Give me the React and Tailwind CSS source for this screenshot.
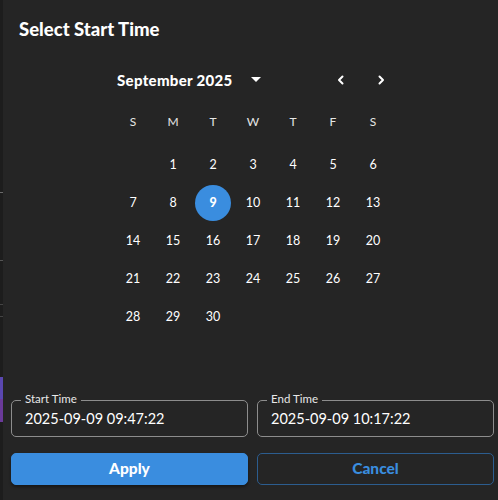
import React from "react";

const weekdays = ["S", "M", "T", "W", "T", "F", "S"];

function Chevron({ dir }) {
  return (
    <svg width="12" height="12" viewBox="0 0 12 12" fill="none" stroke="white" strokeWidth="2" strokeLinecap="round" strokeLinejoin="round">
      {dir === "left" ? <path d="M7.5 2.5 L4 6 L7.5 9.5" /> : <path d="M4.5 2.5 L8 6 L4.5 9.5" />}
    </svg>
  );
}

function Field({ label, value }) {
  return (
    <div className="relative flex-1 h-[37px] rounded-[5px] border border-[#8d8d8d] flex items-center px-[13px]">
      <span className="absolute -top-[9px] left-[9px] px-[4px] bg-[#252525] text-[11.5px] leading-[14px] text-[#e8e8e8]">
        {label}
      </span>
      <span className="text-[14.5px] text-white">{value}</span>
    </div>
  );
}

export default function App() {
  const cells = [];
  for (let i = 0; i < 1; i++) cells.push(null);
  for (let d = 1; d <= 30; d++) cells.push(d);

  return (
    <div className="w-[498px] h-[500px] flex bg-[#1e1e1e] overflow-hidden" style={{ fontFamily: "Lato, 'Noto Sans', sans-serif" }}>
      <div className="w-[3px] h-full flex flex-col bg-[#1d1d1d]">
        <div className="h-[192px]" />
        <div className="h-px bg-[#6a6a6a]" />
        <div className="h-[67px]" />
        <div className="h-px bg-[#555]" />
        <div className="h-[43px]" />
        <div className="h-px bg-[#444]" />
        <div className="h-[11px]" />
        <div className="h-px bg-[#444]" />
        <div className="h-[60px]" />
        <div className="h-[22px] bg-[#5a47b0]" />
        <div className="h-[23px] bg-[#6a3a9a]" />
      </div>
      <div className="flex-1 h-full bg-[#252525] flex flex-col">
        <div className="pl-[16px] pt-[17px] text-[18.5px] font-black text-white leading-[24px]">Select Start Time</div>

        <div className="flex items-center mt-[27px] pl-[114px] h-[24px]">
          <span className="w-[134px] text-[15px] tracking-[0.3px] font-black text-white">September 2025</span>
          <svg width="10" height="6" viewBox="0 0 10 6"><path d="M0 0 L10 0 L5 5 Z" fill="white" /></svg>
          <div className="ml-[74px] flex items-center gap-[28px]">
            <Chevron dir="left" />
            <Chevron dir="right" />
          </div>
        </div>

        <div className="ml-[110px] mt-[21px] w-[280px]">
          <div className="grid grid-cols-7 h-[18px] items-center">
            {weekdays.map((w, i) => (
              <div key={i} className="text-center text-[12px] text-[#e6e6e6]">{w}</div>
            ))}
          </div>
          <div className="grid grid-cols-7 mt-[16px] gap-y-[2px]">
            {cells.map((d, i) => (
              <div key={i} className="h-[36px] flex items-center justify-center">
                {d === 9 ? (
                  <div className="w-[36px] h-[36px] rounded-full bg-[#3a8ddf] flex items-center justify-center text-[12.5px] font-black text-white">9</div>
                ) : d ? (
                  <span className="text-[12.5px] text-white">{d}</span>
                ) : null}
              </div>
            ))}
          </div>
        </div>

        <div className="flex-1" />

        <div className="flex gap-[9px] pl-[8px] pr-[4px]">
          <Field label="Start Time" value="2025-09-09 09:47:22" />
          <Field label="End Time" value="2025-09-09 10:17:22" />
        </div>

        <div className="flex gap-[9px] pl-[8px] pr-[4px] mt-[16px] mb-[15px]">
          <button className="flex-1 h-[32px] rounded-[5px] border border-[#3a8ddf] bg-[#3a8ddf] text-white text-[15.5px] font-black shadow-[0_2px_3px_rgba(0,0,0,0.4)]">Apply</button>
          <button className="flex-1 h-[32px] rounded-[5px] border border-[#2c5d8f] text-[#3a8ddf] text-[15.5px] font-black">Cancel</button>
        </div>
      </div>
    </div>
  );
}
